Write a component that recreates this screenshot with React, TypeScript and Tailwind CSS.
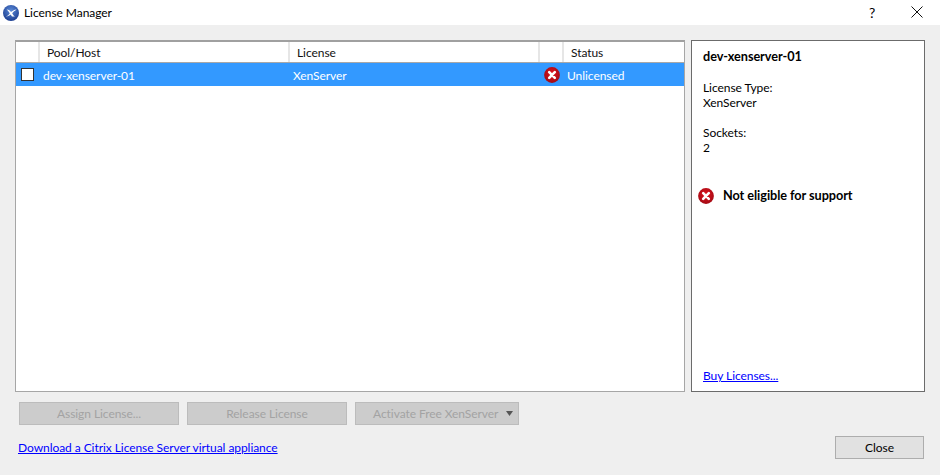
const font = { fontFamily: 'Lato, sans-serif' };

function ErrorIcon({ className }: { className: string }) {
  return (
    <svg viewBox="0 0 16 16" className={className}>
      <defs>
        <radialGradient id="err" cx="50%" cy="40%" r="60%">
          <stop offset="0%" stopColor="#e0141f" />
          <stop offset="100%" stopColor="#a30a14" />
        </radialGradient>
      </defs>
      <circle cx="8" cy="8" r="7.9" fill="url(#err)" />
      <path d="M5.2 5.2 L10.8 10.8 M10.8 5.2 L5.2 10.8" stroke="#fff" strokeWidth="2.6" strokeLinecap="round" />
    </svg>
  );
}

function Logo() {
  return (
    <svg viewBox="0 0 16 16" className="w-4 h-4 shrink-0">
      <defs>
        <radialGradient id="logo" cx="50%" cy="35%" r="65%">
          <stop offset="0%" stopColor="#5a8ad8" />
          <stop offset="100%" stopColor="#1d3f91" />
        </radialGradient>
      </defs>
      <circle cx="8" cy="8" r="8" fill="url(#logo)" />
      <path d="M3.6 4.6 C6 4.6 7 5.8 8 7 C9.4 5.8 11 4.6 13.6 4.4 C11.8 5.5 10.2 7 9.2 8.2 C10 9.6 10.8 10.8 12 11.6 L9 11.6 L7.6 9.6 C6.6 10.5 5.2 11.4 2.8 11.6 C4.6 10.6 6 9.5 6.8 8.4 C6 7 4.8 5.4 3.6 4.6 Z" fill="#fff" />
    </svg>
  );
}

function Disabled({ w, children }: { w: string; children: React.ReactNode }) {
  return (
    <div className={`${w} h-[23px] flex items-center justify-center border border-[#bcbcbc] bg-[#cccccc] text-[#a3a3a3]`}>
      {children}
    </div>
  );
}

export default function App() {
  return (
    <div style={font} className="w-[940px] h-[475px] flex flex-col bg-[#efefef] text-[12px] leading-[15px] tracking-[-0.06px] text-black overflow-hidden">
      <div className="h-[25px] bg-white flex items-center pl-[3px] shrink-0">
        <Logo />
        <span className="ml-[5px] flex-1">License Manager</span>
        <span className="w-[10px] text-center text-[14px] mr-[34px]">?</span>
        <svg viewBox="0 0 12 12" className="w-[12px] h-[12px] mr-[17px] -mt-px">
          <path d="M0.5 0.5 L11.5 11.5 M11.5 0.5 L0.5 11.5" stroke="#111" strokeWidth="1" fill="none" />
        </svg>
      </div>

      <div className="flex flex-col pl-[15px] pr-[15px] pt-[15px]">
        <div className="flex gap-[6px] h-[352px]">
          <div className="w-[670px] flex flex-col bg-white border border-[#a6a6a6] border-t-2 border-t-[#a0a0a0]">
            <div className="h-[22px] flex border-b-2 border-[#a8a8a8] -mb-px text-[#111]">
              <div className="w-[24px] border-r-2 border-[#e6e6e6]" />
              <div className="w-[250px] pl-[7px] border-r-2 border-[#e6e6e6] leading-[21px]">Pool/Host</div>
              <div className="w-[250px] pl-[7px] border-r-2 border-[#e6e6e6] leading-[21px]">License</div>
              <div className="w-[24px] border-r-2 border-[#e6e6e6]" />
              <div className="flex-1 pl-[7px] leading-[21px]">Status</div>
            </div>
            <div className="h-[23px] bg-[#3399ff] flex items-center text-white">
              <div className="w-[24px] flex justify-center pr-[2px]">
                <div className="w-[13px] h-[13px] bg-white border border-[#333]" />
              </div>
              <div className="w-[250px] pl-[3px] pt-px">dev-xenserver-01</div>
              <div className="w-[250px] pl-[3px] pt-px">XenServer</div>
              <div className="w-[24px] flex justify-center pr-[1px]">
                <ErrorIcon className="w-4 h-4" />
              </div>
              <div className="flex-1 pl-[3px] pt-px">Unlicensed</div>
            </div>
          </div>

          <div className="w-[234px] bg-white border border-[#6b6b6b] flex flex-col pl-[11px] pb-[8px] pt-[8px]">
            <div className="font-bold text-[12.7px]">dev-xenserver-01</div>
            <div className="mt-[16px]">License Type:</div>
            <div>XenServer</div>
            <div className="mt-[15px]">Sockets:</div>
            <div>2</div>
            <div className="flex items-center mt-[33px] -ml-[5px]">
              <ErrorIcon className="w-4 h-4 shrink-0" />
              <span className="ml-[9px] font-bold text-[12.7px] -mt-px">Not eligible for support</span>
            </div>
            <a className="mt-auto text-[#0000ff] underline">Buy Licenses...</a>
          </div>
        </div>

        <div className="flex gap-[8px] mt-[10px] pl-[4px]">
          <Disabled w="w-[160px]">Assign License...</Disabled>
          <Disabled w="w-[160px]">Release License</Disabled>
          <div className="w-[164px] h-[23px] flex items-center border border-[#bcbcbc] bg-[#cccccc] text-[#a3a3a3] pl-[17px]">
            <span className="flex-1">Activate Free XenServer</span>
            <svg viewBox="0 0 7 5" className="w-[7px] h-[5px] mr-[5px]"><path d="M0 0 H7 L3.5 5 Z" fill="#555" /></svg>
          </div>
        </div>

        <div className="flex items-center justify-between mt-[11px] pl-[3px] pr-px">
          <a className="text-[#0000ff] underline">Download a Citrix License Server virtual appliance</a>
          <div className="w-[89px] h-[23px] flex items-center justify-center bg-[#e1e1e1] border border-[#adadad]">Close</div>
        </div>
      </div>
    </div>
  );
}
